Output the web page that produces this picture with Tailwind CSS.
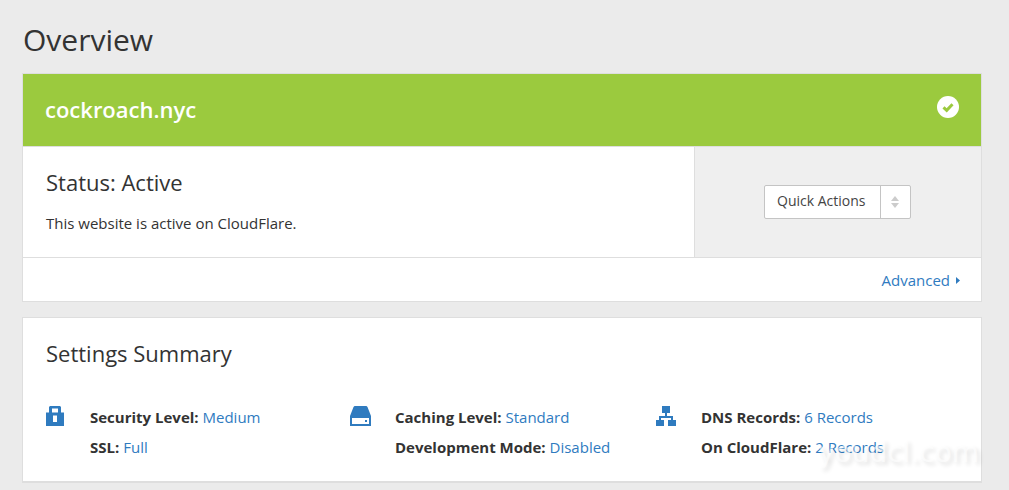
<!DOCTYPE html>
<html lang="en">
<head>
  <meta charset="UTF-8">
  <title>Overview</title>
  <script src="https://cdn.jsdelivr.net/npm/@tailwindcss/browser@4"></script>
</head>
<body class="bg-[#ebebeb] font-['Open_Sans',sans-serif] text-[#333] h-[490px] overflow-hidden relative">
  <div class="pl-[22px] pr-[27px]">
    <h1 class="pt-[19px] text-[30px] leading-[41px] h-[73px] pl-px text-[#333]">Overview</h1>

    <div class="border border-[#dedede] bg-white">
      <div class="h-[73px] bg-[#9bca3e] border-b border-[#dedede] flex items-center justify-between pl-[22px] pr-[22px]">
        <div class="text-[22px] font-semibold text-white leading-[30px] -mt-[2px]">cockroach.nyc</div>
        <svg class="w-[22px] h-[22px] -mt-[7px]" viewBox="0 0 22 22"><circle cx="11" cy="11" r="11" fill="#fff"/><path d="M6.500 11.300l3.200 3 5.800-6" fill="none" stroke="#9bca3e" stroke-width="3"/></svg>
      </div>
      <div class="flex h-[111px] border-b border-[#dedede]">
        <div class="w-[672px] border-r border-[#dedede] pl-[23px] pt-[20px]">
          <h2 class="text-[22px] leading-[30px] text-[#333]">Status: Active</h2>
          <p class="mt-[16px] text-[15px] leading-[20px]">This website is active on CloudFlare.</p>
        </div>
        <div class="flex-1 bg-[#efefef] flex items-center pl-[69px]">
          <div class="flex h-[34px] w-[147px] bg-white border border-[#c4c4c4] rounded-[2px] -mt-[1px]">
            <div class="w-[116px] border-r border-[#c4c4c4] pl-[12px] text-[14px] leading-[30px] text-[#444]">Quick Actions</div>
            <div class="flex-1 flex flex-col items-center justify-center gap-[2px] pr-px">
              <svg class="w-[8px] h-[5px]" viewBox="0 0 8 5"><path d="M4 0l4 5H0z" fill="#ccc"/></svg>
              <svg class="w-[8px] h-[5px]" viewBox="0 0 8 5"><path d="M4 5l4-5H0z" fill="#ccc"/></svg>
            </div>
          </div>
        </div>
      </div>
      <div class="h-[43px] flex items-center justify-end pr-[21px] text-[15px] text-[#2f7bbf]">
        <a href="#" class="mt-[1px]">Advanced</a>
        <svg class="w-[4px] h-[7px] ml-[6px] mt-[1px]" viewBox="0 0 4 7"><path d="M0 0l4 3.500L0 7z" fill="#2f7bbf"/></svg>
      </div>
    </div>

    <div class="mt-[15px] border border-[#dedede] border-b-2 bg-white h-[166px] pl-[23px] pt-[20px]">
      <h2 class="text-[22px] leading-[30px]">Settings Summary</h2>
      <div class="mt-[34px] flex text-[15px] leading-[30px]">
        <div class="w-[304px] flex">
          <svg class="w-[18px] h-[20px] mt-[4px]" viewBox="0 0 18 20" fill="#2f7bbf"><path fill-rule="evenodd" d="M3 6.500V1L4 0h10l1 1v5.500h3V20H0V6.500zM6 6.500h6V2.500H6zM7 9.500v6.500h4V9.500z"/></svg>
          <div class="ml-[26px]">
            <div><b class="font-bold">Security Level:</b> <a href="#" class="text-[#2f7bbf]">Medium</a></div>
            <div><b class="font-bold">SSL:</b> <a href="#" class="text-[#2f7bbf]">Full</a></div>
          </div>
        </div>
        <div class="w-[306px] flex">
          <svg class="w-[21px] h-[20px] mt-[4px]" viewBox="0 0 21 20" fill="#2f7bbf"><path fill-rule="evenodd" d="M4.500 0h12l1 1 3.500 9v10H0V10l3.500-9zM2 12v6h17v-6zM15 14h2v2h-2z"/></svg>
          <div class="ml-[24px]">
            <div><b class="font-bold">Caching Level:</b> <a href="#" class="text-[#2f7bbf]">Standard</a></div>
            <div><b class="font-bold">Development Mode:</b> <a href="#" class="text-[#2f7bbf]">Disabled</a></div>
          </div>
        </div>
        <div class="flex">
          <svg class="w-[20px] h-[20px] mt-[4px]" viewBox="0 0 20 20" fill="#2f7bbf"><path d="M6 0h8v7h-3v3h6v4h3v6h-8v-6h3v-2H5v2h3v6H0v-6h3v-4h6V7H6z"/></svg>
          <div class="ml-[25px]">
            <div><b class="font-bold">DNS Records:</b> <a href="#" class="text-[#2f7bbf]">6 Records</a></div>
            <div><b class="font-bold">On CloudFlare:</b> <a href="#" class="text-[#2f7bbf]">2 Records</a></div>
          </div>
        </div>
      </div>
    </div>
  </div>
  <!-- stock watermark sits over the last card -->
  <div class="absolute left-[818px] top-[436px] text-[28px] leading-[34px] font-['DejaVu_Sans',sans-serif] text-white/60 [text-shadow:3px_3px_4px_rgba(0,0,0,0.12)]">youdcl.com</div>
</body>
</html>
